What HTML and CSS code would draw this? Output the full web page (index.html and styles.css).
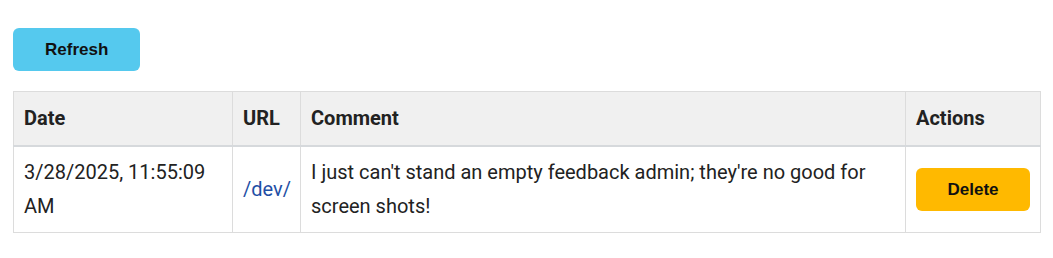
FILE: index.html
```html
<!DOCTYPE html>
<html lang="en">
<head>
<meta charset="utf-8">
<title>Feedback admin</title>
<link rel="stylesheet" href="styles.css">
</head>
<body>
<main class="page">
  <div class="toolbar">
    <button class="btn btn-refresh" type="button">Refresh</button>
  </div>
  <table class="feedback">
    <thead>
      <tr>
        <th class="col-date">Date</th>
        <th class="col-url">URL</th>
        <th class="col-comment">Comment</th>
        <th class="col-actions">Actions</th>
      </tr>
    </thead>
    <tbody>
      <tr>
        <td>3/28/2025, 11:55:09 AM</td>
        <td><a class="url-link" href="#">/dev/</a></td>
        <td>I just can't stand an empty feedback admin; they're no good for screen shots!</td>
        <td><button class="btn btn-delete" type="button">Delete</button></td>
      </tr>
    </tbody>
  </table>
</main>
</body>
</html>
```
FILE: styles.css
```css
html, body {
  margin: 0;
  padding: 0;
  background: #ffffff;
}

.page {
  padding: 28px 12px 0 13px;
  font-family: Roboto, "Liberation Sans", sans-serif;
  color: #222222;
}

.toolbar {
  display: flex;
  margin-bottom: 20px;
}

.btn {
  font-family: "Liberation Sans", Arial, sans-serif;
  font-weight: bold;
  font-size: 17px;
  line-height: 19px;
  padding: 12px 32px;
  border: none;
  border-radius: 6px;
  color: #111111;
  cursor: pointer;
}

.btn-refresh {
  background: #55c9ee;
  width: 127px;
}

.btn-delete {
  background: #ffb900;
  width: 114px;
  padding-left: 0;
  padding-right: 0;
}

.feedback {
  width: 100%;
  border-collapse: collapse;
  table-layout: fixed;
  font-size: 20px;
  line-height: 34px;
}

.feedback th,
.feedback td {
  border: 1px solid #dcdcdc;
  padding: 8px 10px 9px 10px;
  text-align: left;
  vertical-align: middle;
}

.feedback th {
  background: #f0f0f0;
  font-weight: bold;
  color: #222222;
  padding-top: 9px;
  padding-bottom: 10px;
  border-bottom: 2px solid #d6d9dc;
}

.feedback td {
  font-weight: normal;
}

.col-date { width: 198px; }
.col-url { width: 47px; }
.col-actions { width: 114px; }

.url-link {
  color: #1f4fa5;
  text-decoration: none;
}
```
